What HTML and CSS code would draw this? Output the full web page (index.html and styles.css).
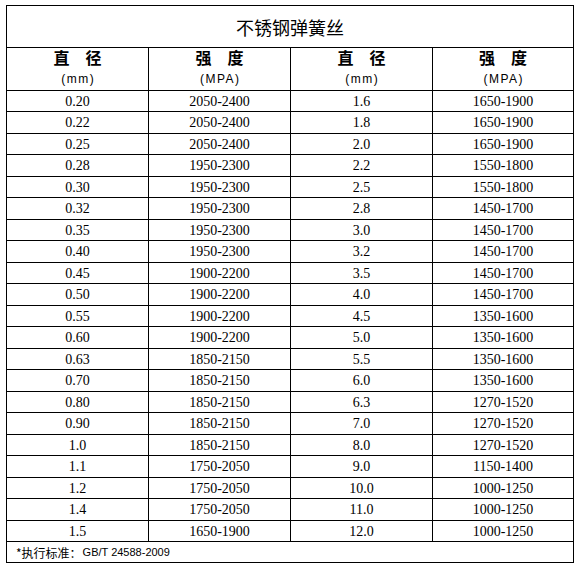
FILE: index.html
```html
<!DOCTYPE html>
<html lang="zh">
<head>
<meta charset="utf-8">
<title>不锈钢弹簧丝</title>
<link rel="stylesheet" href="styles.css">
</head>
<body>
<div class="sheet">
  <div class="title">不锈钢弹簧丝</div>
  <div class="head"><span class="h-main">直　径</span><span class="h-unit">(mm)</span></div>
  <div class="head"><span class="h-main">强　度</span><span class="h-unit">(MPA)</span></div>
  <div class="head"><span class="h-main">直　径</span><span class="h-unit">(mm)</span></div>
  <div class="head"><span class="h-main">强　度</span><span class="h-unit">(MPA)</span></div>

  <div class="c">0.20</div><div class="c">2050-2400</div><div class="c">1.6</div><div class="c">1650-1900</div>
  <div class="c">0.22</div><div class="c">2050-2400</div><div class="c">1.8</div><div class="c">1650-1900</div>
  <div class="c">0.25</div><div class="c">2050-2400</div><div class="c">2.0</div><div class="c">1650-1900</div>
  <div class="c">0.28</div><div class="c">1950-2300</div><div class="c">2.2</div><div class="c">1550-1800</div>
  <div class="c">0.30</div><div class="c">1950-2300</div><div class="c">2.5</div><div class="c">1550-1800</div>
  <div class="c">0.32</div><div class="c">1950-2300</div><div class="c">2.8</div><div class="c">1450-1700</div>
  <div class="c">0.35</div><div class="c">1950-2300</div><div class="c">3.0</div><div class="c">1450-1700</div>
  <div class="c">0.40</div><div class="c">1950-2300</div><div class="c">3.2</div><div class="c">1450-1700</div>
  <div class="c">0.45</div><div class="c">1900-2200</div><div class="c">3.5</div><div class="c">1450-1700</div>
  <div class="c">0.50</div><div class="c">1900-2200</div><div class="c">4.0</div><div class="c">1450-1700</div>
  <div class="c">0.55</div><div class="c">1900-2200</div><div class="c">4.5</div><div class="c">1350-1600</div>
  <div class="c">0.60</div><div class="c">1900-2200</div><div class="c">5.0</div><div class="c">1350-1600</div>
  <div class="c">0.63</div><div class="c">1850-2150</div><div class="c">5.5</div><div class="c">1350-1600</div>
  <div class="c">0.70</div><div class="c">1850-2150</div><div class="c">6.0</div><div class="c">1350-1600</div>
  <div class="c">0.80</div><div class="c">1850-2150</div><div class="c">6.3</div><div class="c">1270-1520</div>
  <div class="c">0.90</div><div class="c">1850-2150</div><div class="c">7.0</div><div class="c">1270-1520</div>
  <div class="c">1.0</div><div class="c">1850-2150</div><div class="c">8.0</div><div class="c">1270-1520</div>
  <div class="c">1.1</div><div class="c">1750-2050</div><div class="c">9.0</div><div class="c">1150-1400</div>
  <div class="c">1.2</div><div class="c">1750-2050</div><div class="c">10.0</div><div class="c">1000-1250</div>
  <div class="c">1.4</div><div class="c">1750-2050</div><div class="c">11.0</div><div class="c">1000-1250</div>
  <div class="c">1.5</div><div class="c">1650-1900</div><div class="c">12.0</div><div class="c">1000-1250</div>

  <div class="foot">*执行标准：<span class="std">GB/T 24588-2009</span></div>
</div>
</body>
</html>
```

FILE: styles.css
```css
html, body {
  margin: 0;
  padding: 0;
  background: #ffffff;
}

body {
  padding: 5px 0 0 6px;
}

.sheet {
  display: grid;
  width: 568px;
  box-sizing: border-box;
  padding: 1px;
  gap: 1px;
  background: #000000;
  grid-template-columns: 141px 141px 141px 140px;
  grid-template-rows: 41px 42px repeat(10, 20px 21px) 20px 20px;
}

.sheet > div {
  background: #ffffff;
}

.title {
  grid-column: 1 / -1;
  display: flex;
  align-items: center;
  justify-content: center;
  font-family: "Noto Sans CJK SC", sans-serif;
  font-size: 18px;
  color: #000;
  padding-top: 1px;
}

.head {
  display: flex;
  flex-direction: column;
  align-items: center;
  color: #000;
}

.h-main {
  font-family: "Noto Sans CJK SC", sans-serif;
  font-weight: 700;
  font-size: 16px;
  line-height: 18px;
  margin-top: 0;
}

.h-unit {
  font-family: "Liberation Sans", sans-serif;
  font-size: 12px;
  letter-spacing: 1.5px;
  line-height: 14px;
  margin-top: 6px;
  text-indent: 1.5px;
}

.c {
  display: flex;
  align-items: center;
  justify-content: center;
  font-family: "Liberation Serif", serif;
  font-size: 14px;
  color: #000;
  padding-top: 1px;
}

.foot {
  grid-column: 1 / -1;
  display: flex;
  align-items: center;
  padding-left: 9px;
  font-family: "Noto Sans CJK SC", sans-serif;
  font-size: 12px;
  color: #000;
}

.std {
  font-family: "Liberation Sans", sans-serif;
  font-size: 11px;
  margin-left: 1px;
}
```
